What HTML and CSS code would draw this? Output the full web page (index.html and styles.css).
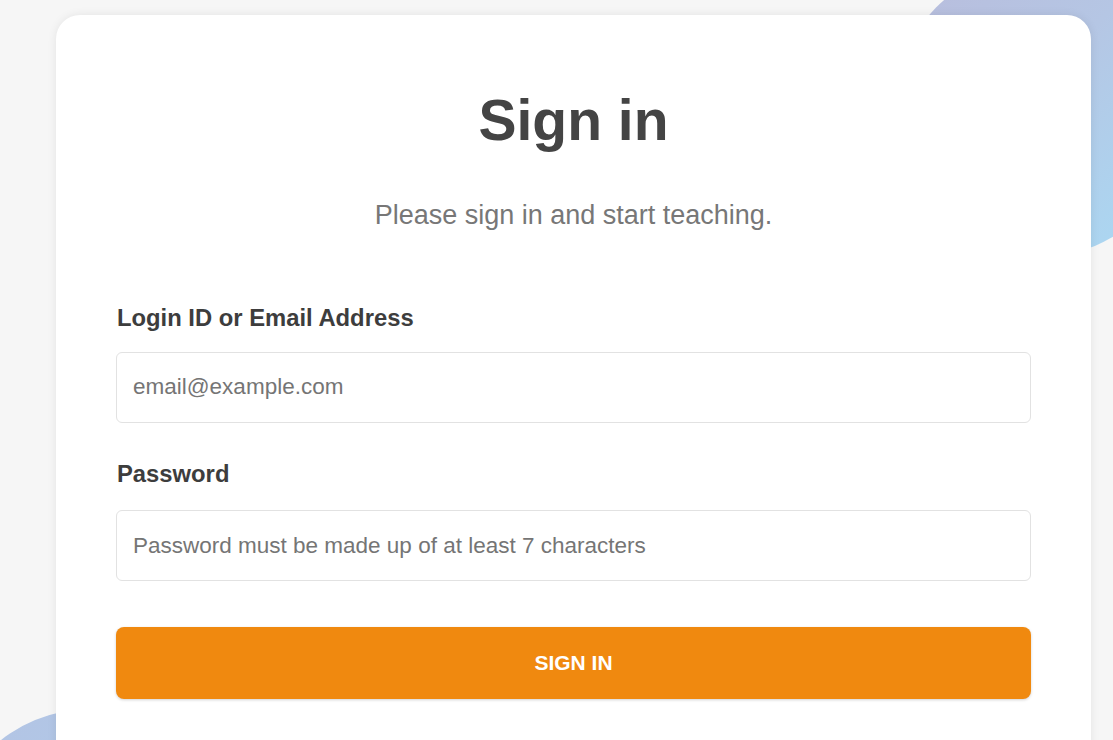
FILE: index.html
```html
<!DOCTYPE html>
<html lang="en">
<head>
<meta charset="utf-8">
<title>Sign in</title>
<link rel="stylesheet" href="styles.css">
</head>
<body>
<div class="page">
  <div class="blob blob-top"></div>
  <div class="blob blob-bottom"></div>
  <main class="card">
    <h1 class="title">Sign in</h1>
    <p class="subtitle">Please sign in and start teaching.</p>
    <form class="form">
      <label class="label" for="login">Login ID or Email Address</label>
      <input class="input" id="login" type="text" placeholder="email@example.com">
      <label class="label label-second" for="password">Password</label>
      <input class="input input-second" id="password" type="password" placeholder="Password must be made up of at least 7 characters">
      <button class="button" type="button">Sign in</button>
    </form>
  </main>
</div>
</body>
</html>
```

FILE: styles.css
```css
* { box-sizing: border-box; }

html, body {
  margin: 0;
  padding: 0;
  background: #f6f6f6;
  font-family: "Liberation Sans", Arial, sans-serif;
}

.page {
  position: relative;
  height: 740px;
  overflow: hidden;
  padding: 15px 22px 0 56px;
}

.blob {
  position: absolute;
  border-radius: 50%;
  z-index: 0;
}

.blob-top {
  left: 893px;
  top: -35px;
  width: 292px;
  height: 292px;
  background: linear-gradient(135deg, #b9bcdc 0%, #b5c6e4 45%, #a8dcf6 100%);
}

.blob-bottom {
  left: -55px;
  top: 709px;
  width: 292px;
  height: 292px;
  background: linear-gradient(135deg, #b3c3e3 0%, #aed0ee 100%);
}

.card {
  position: relative;
  z-index: 1;
  background: #ffffff;
  border-radius: 24px;
  box-shadow: 0 0 10px rgba(0, 0, 0, 0.08);
  height: 760px;
  padding: 73px 60px 0 60px;
}

.title {
  margin: 0;
  text-align: center;
  font-size: 57px;
  line-height: 1.15;
  font-weight: 700;
  color: #444444;
}

.subtitle {
  margin: 46px 0 0 0;
  text-align: center;
  font-size: 27px;
  line-height: 1.15;
  color: #777777;
}

.form {
  display: flex;
  flex-direction: column;
  margin-top: 73px;
}

.label {
  font-size: 23.8px;
  line-height: 1.15;
  font-weight: 700;
  color: #3d3d3d;
  padding-left: 1px;
}

.label-second {
  margin-top: 37px;
}

.input {
  margin-top: 21px;
  height: 71px;
  border: 1px solid #e2e2e2;
  border-radius: 6px;
  padding: 0 16px;
  font-family: "Liberation Sans", Arial, sans-serif;
  font-size: 22.5px;
  color: #444444;
  background: #ffffff;
  outline: none;
}

.input-second {
  margin-top: 23px;
}

.input::placeholder {
  color: #757575;
}

.button {
  margin-top: 46px;
  height: 72px;
  border: none;
  border-radius: 8px;
  background: #f0890f;
  color: #ffffff;
  font-family: "Liberation Sans", Arial, sans-serif;
  font-size: 21px;
  font-weight: 700;
  text-transform: uppercase;
  box-shadow: 0 1px 3px rgba(0, 0, 0, 0.18);
  cursor: pointer;
}
```
